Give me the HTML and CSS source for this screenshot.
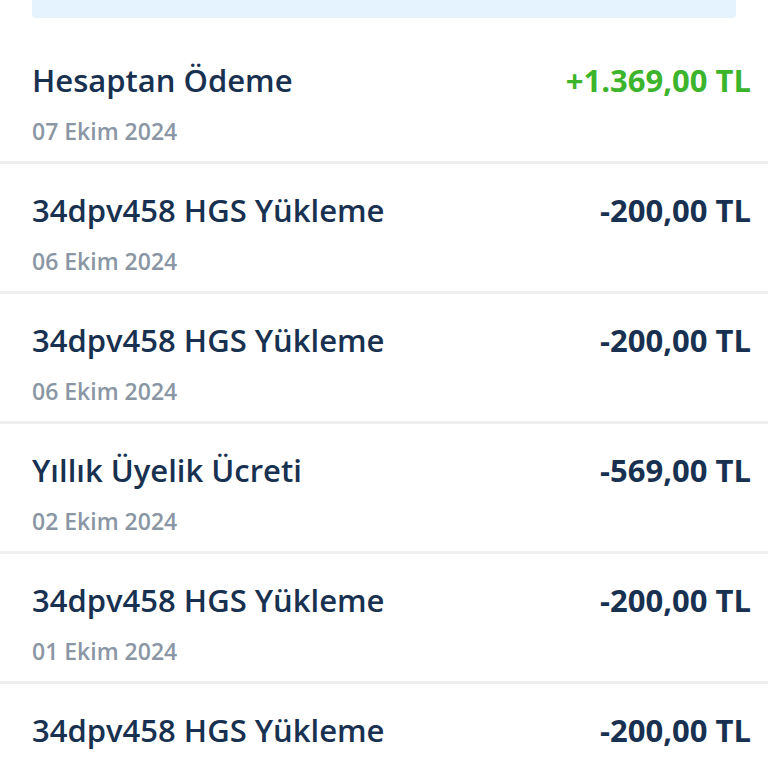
FILE: index.html
```html
<!DOCTYPE html>
<html lang="tr">
<head>
<meta charset="utf-8">
<link rel="stylesheet" href="styles.css">
</head>
<body>
<div class="page">
  <div class="banner"></div>
  <ul class="list">
    <li class="row">
      <div class="info"><div class="title">Hesaptan Ödeme</div><div class="date">07 Ekim 2024</div></div>
      <div class="amount plus">+1.369,00 TL</div>
    </li>
    <li class="row">
      <div class="info"><div class="title">34dpv458 HGS Yükleme</div><div class="date">06 Ekim 2024</div></div>
      <div class="amount">-200,00 TL</div>
    </li>
    <li class="row">
      <div class="info"><div class="title">34dpv458 HGS Yükleme</div><div class="date">06 Ekim 2024</div></div>
      <div class="amount">-200,00 TL</div>
    </li>
    <li class="row">
      <div class="info"><div class="title">Yıllık Üyelik Ücreti</div><div class="date">02 Ekim 2024</div></div>
      <div class="amount">-569,00 TL</div>
    </li>
    <li class="row">
      <div class="info"><div class="title">34dpv458 HGS Yükleme</div><div class="date">01 Ekim 2024</div></div>
      <div class="amount">-200,00 TL</div>
    </li>
    <li class="row">
      <div class="info"><div class="title">34dpv458 HGS Yükleme</div></div>
      <div class="amount">-200,00 TL</div>
    </li>
  </ul>
</div>
</body>
</html>
```
FILE: styles.css
```css
html, body {
  margin: 0;
  padding: 0;
  background: #ffffff;
}
body {
  font-family: "Open Sans", "Noto Sans", sans-serif;
  height: 768px;
  overflow: hidden;
}
.page {
  display: flex;
  flex-direction: column;
}
.banner {
  height: 18px;
  margin: 0 32px 16px 32px;
  background: #e5f3fe;
  border-radius: 0 0 4px 4px;
}
.list {
  list-style: none;
  margin: 0;
  padding: 0;
}
.row {
  display: flex;
  justify-content: space-between;
  align-items: flex-start;
  height: 127px;
  box-sizing: content-box;
  padding: 0 17px 0 32px;
  border-bottom: 3px solid #efefef;
}
.info {
  display: flex;
  flex-direction: column;
  padding-top: 27px;
}
.title {
  font-size: 31px;
  line-height: 38px;
  font-weight: 600;
  color: #183150;
}
.date {
  margin-top: 17px;
  font-size: 23px;
  line-height: 30px;
  font-weight: 600;
  color: #8a96a4;
}
.amount {
  padding-top: 27px;
  font-size: 31px;
  line-height: 38px;
  font-weight: 700;
  color: #183150;
}
.amount.plus {
  color: #3cb42b;
}
```
